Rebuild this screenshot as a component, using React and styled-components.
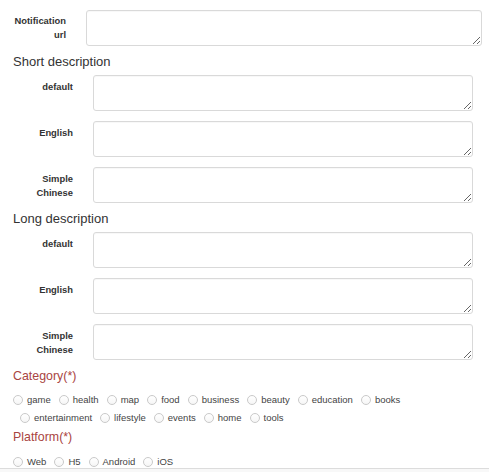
import React from "react";
import styled, { createGlobalStyle } from "styled-components";

const GlobalStyle = createGlobalStyle`
  body {
    margin: 0;
    background: #fff;
    font-family: "Liberation Sans", Arial, Helvetica, sans-serif;
    color: #333;
  }
`;

const Form = styled.form`
  padding-top: 10px;
  padding-bottom: 10px;
`;

const FieldRow = styled.div`
  display: grid;
  grid-template-columns: ${(p) => p.$labelWidth}px 1fr;
  column-gap: 20px;
  padding-right: ${(p) => p.$right}px;
  & + & {
    margin-top: 10px;
  }
`;

const FieldLabel = styled.label`
  text-align: right;
  font-weight: bold;
  font-size: 9.4px;
  line-height: 13.5px;
  padding-top: ${(p) => p.$top}px;
  color: #333;
`;

const TextArea = styled.textarea`
  display: block;
  box-sizing: border-box;
  width: 100%;
  height: 36px;
  margin: 0;
  padding: 4px 8px;
  border: 1px solid #d9d9d9;
  border-radius: 3px;
  background: #fff;
  box-shadow: inset 0 1px 1px rgba(0, 0, 0, 0.03);
  font-family: inherit;
  font-size: 11px;
  outline: none;
`;

const SectionTitle = styled.h3`
  margin: ${(p) => p.$top}px 0 ${(p) => p.$bottom}px 13px;
  font-size: ${(p) => (p.$required ? "12.4px" : "13px")};
  line-height: 16px;
  font-weight: normal;
  color: ${(p) => (p.$required ? "#a94442" : "#333")};
`;

const RadioGroup = styled.div`
  padding: 0 16px 0 13px;
  font-size: 9.5px;
  line-height: 18px;
  color: #444;
`;

const RadioItem = styled.label`
  display: inline-flex;
  align-items: center;
  height: 18px;
  vertical-align: top;
  & + & {
    margin-left: 7px;
  }
`;

const RadioInput = styled.input`
  appearance: none;
  -webkit-appearance: none;
  box-sizing: border-box;
  width: 10px;
  height: 10px;
  margin: 0 4px 0 0;
  border: 1px solid #c9c9c9;
  border-radius: 50%;
  background: linear-gradient(#fff, #f6f6f6);
`;

const RadioText = styled.span`
  padding-right: 1px;
`;

const Footer = styled.div`
  position: fixed;
  left: 0;
  right: 0;
  bottom: 0;
  height: 3px;
  border-top: 1px solid #dcdcdc;
  background: #f8f8f8;
`;

const categories = [
  "game",
  "health",
  "map",
  "food",
  "business",
  "beauty",
  "education",
  "books",
  "entertainment",
  "lifestyle",
  "events",
  "home",
  "tools",
];

const platforms = ["Web", "H5", "Android", "iOS"];

const languages = [
  ["default"],
  ["English"],
  ["Simple", "Chinese"],
];

const LangLabel = ({ lines }) => (
  <FieldLabel $top={5}>
    {lines.map((l) => (
      <div key={l}>{l}</div>
    ))}
  </FieldLabel>
);

const DescriptionGroup = ({ title, name }) => (
  <>
    <SectionTitle $top={8} $bottom={5}>
      {title}
    </SectionTitle>
    {languages.map((lines) => (
      <FieldRow key={lines.join(" ")} $labelWidth={73} $right={16}>
        <LangLabel lines={lines} />
        <TextArea name={`${name}_${lines.join("_")}`} />
      </FieldRow>
    ))}
  </>
);

const Radios = ({ name, items }) => (
  <RadioGroup>
    {items.map((item) => (
      <RadioItem key={item}>
        <RadioInput type="radio" name={name} value={item} />
        <RadioText>{item}</RadioText>
      </RadioItem>
    ))}
  </RadioGroup>
);

const App = () => {
  return (
    <>
      <GlobalStyle />
      <Form onSubmit={(e) => e.preventDefault()}>
        <FieldRow $labelWidth={66} $right={7}>
          <FieldLabel $top={4}>
            <div>Notification</div>
            <div>url</div>
          </FieldLabel>
          <TextArea name="notification_url" />
        </FieldRow>

        <DescriptionGroup title="Short description" name="short" />
        <DescriptionGroup title="Long description" name="long" />

        <SectionTitle $required $top={8} $bottom={7}>
          Category(*)
        </SectionTitle>
        <Radios name="category" items={categories} />

        <SectionTitle $required $top={2} $bottom={8}>
          Platform(*)
        </SectionTitle>
        <Radios name="platform" items={platforms} />
      </Form>
      <Footer />
    </>
  );
};

export default App;
